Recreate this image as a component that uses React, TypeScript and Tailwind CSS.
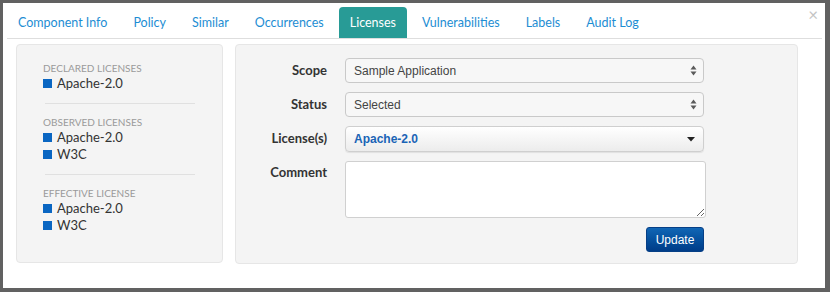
import { useState } from "react";

const tabs = [
  "Component Info",
  "Policy",
  "Similar",
  "Occurrences",
  "Licenses",
  "Vulnerabilities",
  "Labels",
  "Audit Log",
];

const sections = [
  { title: "Declared Licenses", items: ["Apache-2.0"] },
  { title: "Observed Licenses", items: ["Apache-2.0", "W3C"] },
  { title: "Effective License", items: ["Apache-2.0", "W3C"] },
];

function UpDownArrows() {
  return (
    <svg width="7" height="11" viewBox="0 0 7 11" fill="none">
      <path d="M3.5 0.5L6.5 4.5H0.5Z" fill="#5a5a5a" />
      <path d="M3.5 10.5L6.5 6.5H0.5Z" fill="#5a5a5a" />
    </svg>
  );
}

function Caret() {
  return (
    <svg width="8" height="5" viewBox="0 0 8 5" fill="none">
      <path d="M0 0H8L4 4.5Z" fill="#222" />
    </svg>
  );
}

function SelectBox({ value }: { value: string }) {
  return (
    <div className="flex h-[25px] w-[359px] items-center justify-between rounded-[4px] border border-[#c9c9c9] bg-[#f7f7f7] pl-[8px] pr-[6px] font-['Liberation_Sans',sans-serif] text-[12px] font-normal text-[#444]">
      <span>{value}</span>
      <UpDownArrows />
    </div>
  );
}

export default function App() {
  const [active, setActive] = useState("Licenses");

  return (
    <div className="h-[292px] w-[830px] bg-[#616161] pb-[4px] pl-[3px] pr-[5px] pt-[3px] font-['Lato',sans-serif]">
      <div className="relative flex h-full flex-col bg-white">
        <span className="absolute right-[7px] top-[3px] text-[17px] leading-none text-[#c4c4c4]">×</span>

        <div className="ml-[4px] mr-[3px] flex gap-[4px] border-b border-[#dedede] pt-[4px]">
          {tabs.map((tab) => {
            const isActive = tab === active;
            return (
              <button
                key={tab}
                type="button"
                onClick={() => setActive(tab)}
                className={`h-[31px] rounded-t-[4px] px-[11px] pt-[1px] text-[12.5px] leading-[30px] ${
                  isActive ? "bg-[#289b96] text-white" : "text-[#1d8dd3]"
                }`}
              >
                {tab}
              </button>
            );
          })}
        </div>

        <div className="ml-[13px] mt-[5px] flex gap-[12px]">
          <div className="h-[219px] w-[207px] rounded-[4px] border border-[#e6e6e6] bg-[#f4f4f4] px-[26px] pt-[17px]">
            {sections.map((section, i) => (
              <div key={section.title}>
                {i > 0 && <div className="mb-[12px] ml-[2px] mt-[11px] h-px w-[150px] bg-[#e0e0e0]" />}
                <div className="text-[10px] uppercase leading-[12px] text-[#9a9a9a]">{section.title}</div>
                <div className="mt-[1px]">
                  {section.items.map((item) => (
                    <div key={item} className="flex h-[17px] items-center gap-[5px] text-[13px] text-[#333]">
                      <span className="h-[9px] w-[9px] bg-[#0a66c2]" />
                      {item}
                    </div>
                  ))}
                </div>
              </div>
            ))}
          </div>

          <div className="h-[220px] w-[563px] rounded-[4px] border border-[#e6e6e6] bg-[#f4f4f4] pt-[13px]">
            <div className="grid grid-cols-[91px_359px] gap-x-[18px] gap-y-[9px] text-[13px] font-bold text-[#333]">
              <div className="self-center text-right">Scope</div>
              <SelectBox value="Sample Application" />

              <div className="self-center text-right">Status</div>
              <SelectBox value="Selected" />

              <div className="self-center text-right">License(s)</div>
              <div className="flex h-[26px] items-center justify-between rounded-[4px] border border-[#cfcfcf] bg-gradient-to-b from-white to-[#ececec] pl-[8px] pr-[8px] font-['Liberation_Sans',sans-serif] text-[12px] font-bold text-[#1a64b6] shadow-[0_1px_1px_rgba(0,0,0,0.08)]">
                <span>Apache-2.0</span>
                <Caret />
              </div>

              <div className="pt-[2px] text-right">Comment</div>
              <textarea className="h-[57px] w-[361px] rounded-[3px] border border-[#d0d0d0] bg-white" />

              <div />
              <div className="flex justify-end">
                <button
                  type="button"
                  className="h-[25px] w-[58px] rounded-[3px] border border-[#063f86] bg-gradient-to-b from-[#1166b5] to-[#003c88] font-['Liberation_Sans',sans-serif] text-[12px] font-normal text-white"
                >
                  Update
                </button>
              </div>
            </div>
          </div>
        </div>
      </div>
    </div>
  );
}
